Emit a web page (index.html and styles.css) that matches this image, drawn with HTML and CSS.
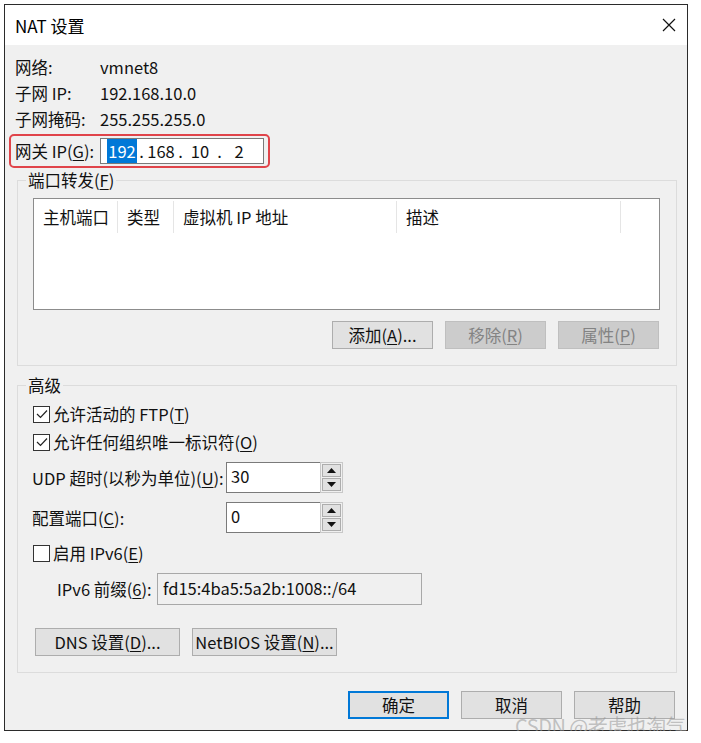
FILE: index.html
```html
<!DOCTYPE html>
<html lang="zh-CN">
<head>
<meta charset="utf-8">
<title>NAT 设置</title>
<link rel="stylesheet" href="styles.css">
</head>
<body>
<div class="window">
  <div class="titlebar">
    <span class="title">NAT 设置</span>
    <svg class="close" width="14" height="14" viewBox="0 0 14 14"><path d="M1 1L13 13M13 1L1 13" stroke="#111" stroke-width="1.2" fill="none"/></svg>
  </div>
  <div class="content">
    <div class="info">
      <div class="info-row"><span class="lbl">网络:</span><span>vmnet8</span></div>
      <div class="info-row"><span class="lbl">子网 IP:</span><span>192.168.10.0</span></div>
      <div class="info-row"><span class="lbl">子网掩码:</span><span>255.255.255.0</span></div>
    </div>
    <div class="gateway">
      <span class="lbl">网关 IP(<u>G</u>):</span>
      <div class="ipbox">
        <span class="seg"><span class="sel">192</span></span><span class="dot">.</span>
        <span class="seg">168</span><span class="dot">.</span>
        <span class="seg">10</span><span class="dot">.</span>
        <span class="seg">2</span>
      </div>
    </div>

    <fieldset class="group pf">
      <legend>端口转发(<u>F</u>)</legend>
      <div class="listview">
        <div class="lv-head">
          <div class="col c1">主机端口</div>
          <div class="col c2">类型</div>
          <div class="col c3">虚拟机 IP 地址</div>
          <div class="col c4">描述</div>
        </div>
      </div>
      <div class="btnrow">
        <button class="btn">添加(<u>A</u>)...</button>
        <button class="btn disabled">移除(<u>R</u>)</button>
        <button class="btn disabled">属性(<u>P</u>)</button>
      </div>
    </fieldset>

    <fieldset class="group adv">
      <legend>高级</legend>
      <div class="cb-row first">
        <span class="cb checked"><svg width="12" height="10" viewBox="0 0 12 10"><path d="M1 5L4.5 8.5L11 1.5" stroke="#222" stroke-width="1.2" fill="none"/></svg></span>
        <span>允许活动的 FTP(<u>T</u>)</span>
      </div>
      <div class="cb-row">
        <span class="cb checked"><svg width="12" height="10" viewBox="0 0 12 10"><path d="M1 5L4.5 8.5L11 1.5" stroke="#222" stroke-width="1.2" fill="none"/></svg></span>
        <span>允许任何组织唯一标识符(<u>O</u>)</span>
      </div>
      <div class="spin-row first">
        <span class="spin-lbl">UDP 超时(以秒为单位)(<u>U</u>):</span>
        <div class="spinner">
          <div class="spin-input">30</div>
          <div class="spin-btns">
            <div class="sb"><svg width="9" height="5" viewBox="0 0 9 5"><path d="M0 5L4.5 0L9 5Z" fill="#111"/></svg></div>
            <div class="sb"><svg width="9" height="5" viewBox="0 0 9 5"><path d="M0 0L4.5 5L9 0Z" fill="#111"/></svg></div>
          </div>
        </div>
      </div>
      <div class="spin-row">
        <span class="spin-lbl">配置端口(<u>C</u>):</span>
        <div class="spinner">
          <div class="spin-input">0</div>
          <div class="spin-btns">
            <div class="sb"><svg width="9" height="5" viewBox="0 0 9 5"><path d="M0 5L4.5 0L9 5Z" fill="#111"/></svg></div>
            <div class="sb"><svg width="9" height="5" viewBox="0 0 9 5"><path d="M0 0L4.5 5L9 0Z" fill="#111"/></svg></div>
          </div>
        </div>
      </div>
      <div class="cb-row ipv6">
        <span class="cb"></span>
        <span>启用 IPv6(<u>E</u>)</span>
      </div>
      <div class="prefix-row">
        <span class="prefix-lbl">IPv6 前缀(<u>6</u>):</span>
        <div class="prefix-field">fd15:4ba5:5a2b:1008::/64</div>
      </div>
      <div class="adv-btns">
        <button class="btn wide">DNS 设置(<u>D</u>)...</button>
        <button class="btn wide">NetBIOS 设置(<u>N</u>)...</button>
      </div>
    </fieldset>

    <div class="footer">
      <button class="btn default">确定</button>
      <button class="btn">取消</button>
      <button class="btn">帮助</button>
    </div>
  </div>
  <div class="watermark">CSDN @老虎也淘气</div>
  <div class="watermark2">@稀土掘金技术社区</div>
</div>
</body>
</html>
```
FILE: styles.css
```css
html, body {
  margin: 0;
  padding: 0;
  background: #ffffff;
}
body {
  font-family: "Noto Sans CJK SC", "Noto Sans", sans-serif;
  font-size: 16.5px;
  color: #111;
}
* { box-sizing: border-box; }
u { text-decoration: underline; text-underline-offset: 2px; }

.window {
  position: relative;
  margin: 4px 0 0 4px;
  width: 684px;
  height: 727px;
  border: 1px solid #2b2b2b;
  display: flex;
  flex-direction: column;
  background: #f0f0f0;
}
.titlebar {
  height: 40px;
  background: #ffffff;
  display: flex;
  align-items: center;
  justify-content: space-between;
  padding: 0 11px 0 10px;
}
.title { font-size: 17px; color: #000; }

.content {
  flex: 1;
  padding: 9px 10px 0 10px;
}
.info-row {
  height: 26px;
  display: flex;
  align-items: center;
}
.lbl { width: 85px; flex: none; }

.gateway {
  margin: 2px 0 0 -6px;
  width: 261px;
  height: 34px;
  border: 2px solid #e0444a;
  border-radius: 5px;
  display: flex;
  align-items: center;
  padding-left: 4px;
}
.ipbox {
  width: 164px;
  height: 26px;
  background: #fff;
  border: 1px solid #7a7a7a;
  display: flex;
  align-items: center;
  padding-left: 6px;
}
.seg { width: 30px; text-align: center; }
.dot { width: 9px; text-align: center; }
.sel { background: #0078d7; color: #fff; padding: 0 1px; }

.group {
  margin: 2px 0 0 2px;
  padding: 0;
  border: 1px solid #dcdcdc;
  border-radius: 0;
  min-width: 0;
}
.group legend {
  margin-left: 8px;
  padding: 0 2px;
  line-height: 20px;
  height: 20px;
}
.adv { margin-top: 9px; padding-bottom: 16px; }

.listview {
  margin: 8px 16px 0 15px;
  height: 112px;
  background: #fff;
  border: 1px solid #8c8c8c;
}
.lv-head {
  display: flex;
  height: 36px;
  padding-top: 1px;
}
.col {
  height: 32px;
  display: flex;
  align-items: center;
  padding-left: 9px;
  border-right: 1px solid #e5e5e5;
  margin-top: 1px;
}
.c1 { width: 84px; }
.c2 { width: 56px; }
.c3 { width: 223px; }
.c4 { width: 224px; }

.btnrow {
  display: flex;
  justify-content: flex-end;
  gap: 12px;
  margin: 11px 17px 16px 0;
}
.btn {
  font-family: inherit;
  font-size: 16.5px;
  color: #111;
  width: 101px;
  height: 28px;
  background: #e1e1e1;
  border: 1px solid #adadad;
  padding: 0;
  display: flex;
  align-items: center;
  justify-content: center;
  line-height: 1;
}
.btn.disabled {
  background: #cccccc;
  border-color: #bfbfbf;
  color: #838383;
}
.btn.wide { width: 145px; }
.btn.default { border: 2px solid #0078d7; }

.cb-row {
  height: 28px;
  display: flex;
  align-items: center;
  padding-left: 15px;
  gap: 3px;
}
.cb-row.first { margin-top: 5px; }
.cb {
  width: 17px;
  height: 17px;
  border: 1px solid #333;
  background: #fff;
  display: flex;
  align-items: center;
  justify-content: center;
}

.spin-row {
  display: flex;
  align-items: center;
  height: 31px;
  margin-top: 9px;
  padding-left: 14px;
}
.spin-row.first { margin-top: 6px; }
.spin-lbl { width: 194px; flex: none; }
.spinner {
  display: flex;
  height: 31px;
}
.spin-input {
  width: 94px;
  height: 31px;
  background: #fff;
  border: 1px solid #7a7a7a;
  border-right: none;
  padding: 3px 0 0 4px;
  line-height: 20px;
}
.spin-btns {
  width: 23px;
  height: 31px;
  border: 1px solid #c8c8c8;
  display: flex;
  flex-direction: column;
  justify-content: space-between;
  padding: 1px;
  background: #f0f0f0;
}
.sb {
  height: 13px;
  background: #e1e1e1;
  border: 1px solid #adadad;
  display: flex;
  align-items: center;
  justify-content: center;
}
.cb-row.ipv6 { margin-top: 6px; }

.prefix-row {
  display: flex;
  align-items: center;
  margin-top: 6px;
  padding-left: 39px;
  height: 32px;
}
.prefix-lbl { width: 100px; flex: none; }
.prefix-field {
  width: 265px;
  height: 32px;
  border: 1px solid #a8a8a8;
  background: #f0f0f0;
  padding: 4px 0 0 5px;
  line-height: 20px;
}
.adv-btns {
  display: flex;
  gap: 12px;
  margin-top: 23px;
  padding-left: 17px;
}

.footer {
  display: flex;
  justify-content: flex-end;
  gap: 12px;
  margin: 18px 2px 0 0;
}

.watermark {
  position: absolute;
  left: 510px;
  top: 706px;
  font-size: 20px;
  color: rgba(150,150,150,0.55);
  letter-spacing: -0.5px;
  white-space: nowrap;
  pointer-events: none;
}
.watermark2 {
  position: absolute;
  left: 566px;
  top: 720px;
  font-size: 13px;
  color: rgba(160,160,160,0.5);
  white-space: nowrap;
  pointer-events: none;
}
```
